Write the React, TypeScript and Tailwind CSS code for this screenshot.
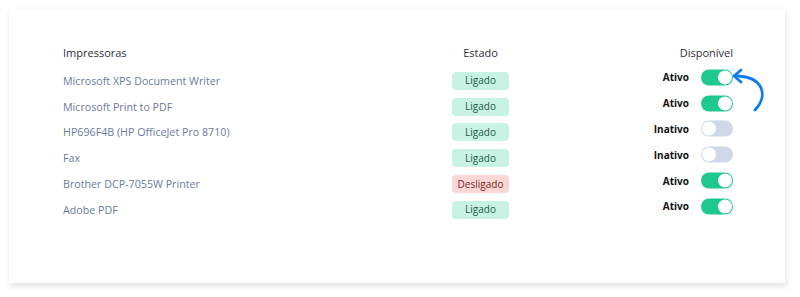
import React from 'react';

type Printer = {
  name: string;
  online: boolean;
  active: boolean;
};

const printers: Printer[] = [
  { name: 'Microsoft XPS Document Writer', online: true, active: true },
  { name: 'Microsoft Print to PDF', online: true, active: true },
  { name: 'HP696F4B (HP OfficeJet Pro 8710)', online: true, active: false },
  { name: 'Fax', online: true, active: false },
  { name: 'Brother DCP-7055W Printer', online: false, active: true },
  { name: 'Adobe PDF', online: true, active: true },
];

function Toggle({ on }: { on: boolean }) {
  return (
    <div
      className={`flex h-[16px] w-[32px] items-center rounded-full p-[1px] ${
        on ? 'justify-end bg-[#1fc88f]' : 'justify-start bg-[#cfd7e8]'
      }`}
    >
      <div className="h-[14px] w-[14px] rounded-full bg-white" />
    </div>
  );
}

function StatusBadge({ online }: { online: boolean }) {
  return online ? (
    <span className="flex h-[18px] w-[57px] items-center justify-center rounded-[4px] bg-[#c8f2e3] text-[10px] font-medium text-[#1d5a44]">
      Ligado
    </span>
  ) : (
    <span className="flex h-[18px] w-[57px] items-center justify-center rounded-[4px] bg-[#fdd6d6] text-[10px] font-medium text-[#7a2a2a]">
      Desligado
    </span>
  );
}

export default function App() {
  return (
    <div className="h-[297px] w-[800px] bg-white pl-[9px] pt-[9px] font-['Open_Sans',sans-serif]">
      <div className="relative h-[274px] w-[776px] bg-white pl-[54px] pt-[36px] shadow-[1px_3px_6px_rgba(40,50,80,0.14)]">
        {/* cabeçalho */}
        <div className="flex h-[16px] items-center text-[11px] font-medium text-[#2f2f3d]">
          <div className="w-[389px]">Impressoras</div>
          <div className="w-[57px] text-center">Estado</div>
          <div className="w-[224px] text-right">Disponível</div>
        </div>

        <div className="mt-[7px] flex flex-col">
          {printers.map((p) => (
            <div key={p.name} className="flex h-[25.8px] items-center">
              <div className="w-[389px] text-[10.7px] text-[#6c7aa0]">{p.name}</div>
              <StatusBadge online={p.online} />
              <div className="flex w-[224px] -translate-y-[3.5px] items-center justify-end gap-[12px]">
                <span className="text-[10px] font-bold text-[#111]">{p.active ? 'Ativo' : 'Inativo'}</span>
                <Toggle on={p.active} />
              </div>
            </div>
          ))}
        </div>

        {/* seta */}
        <svg
          className="absolute left-[718px] top-[58px]"
          width="40"
          height="50"
          viewBox="0 0 40 50"
          fill="none"
          stroke="#0b7cf0"
          strokeWidth="2.8"
          strokeLinecap="round"
          strokeLinejoin="round"
        >
          <path d="M28 43 C42 28, 36 9, 8 9" />
          <path d="M14 3 L7 9 L14 15" />
        </svg>
      </div>
    </div>
  );
}
